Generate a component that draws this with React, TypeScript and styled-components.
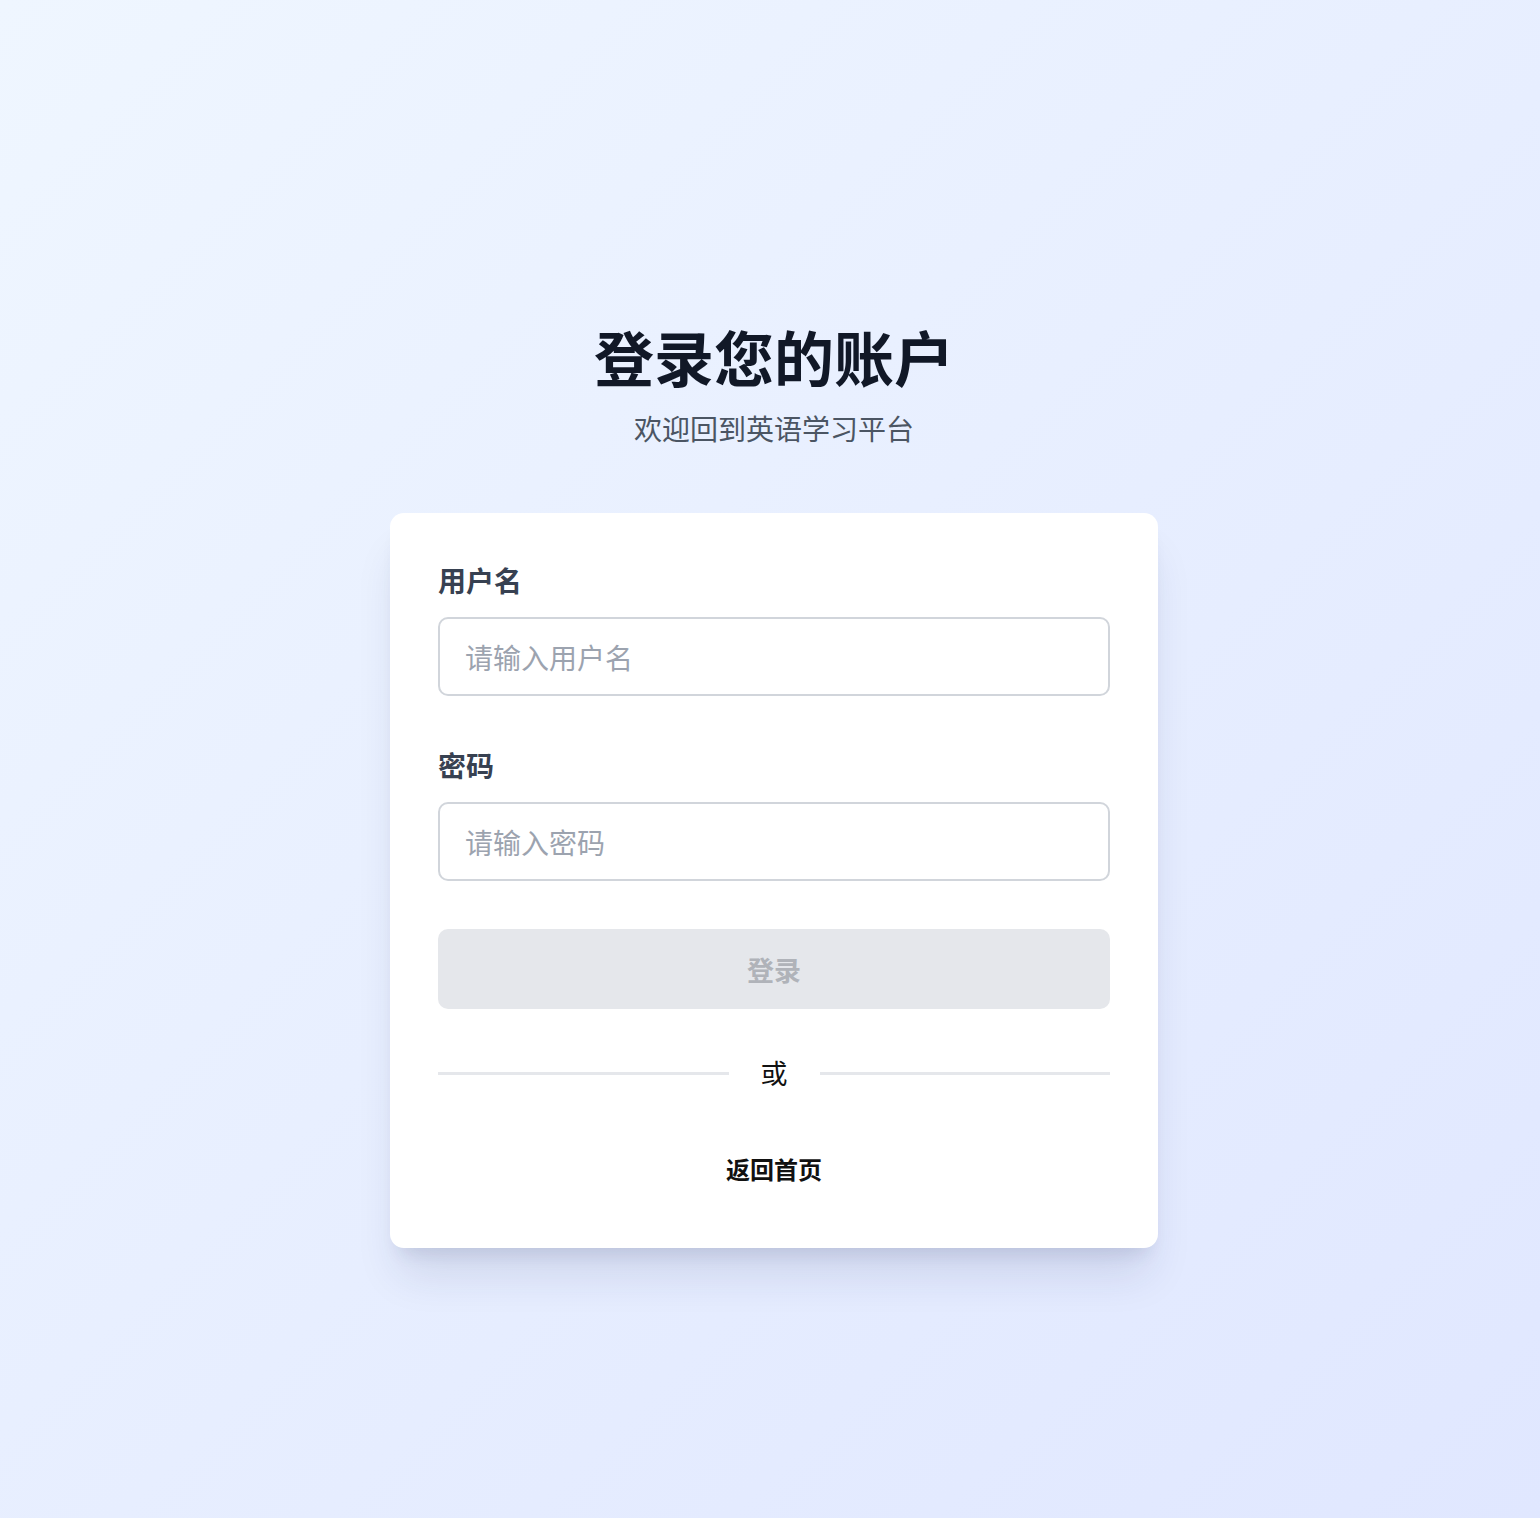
import React from "react";
import styled, { createGlobalStyle } from "styled-components";

const GlobalStyle = createGlobalStyle`
  * { box-sizing: border-box; }
  html, body { margin: 0; padding: 0; }
  body {
    font-family: "Noto Sans CJK SC", "Noto Sans", "Liberation Sans", sans-serif;
    background: #e4e9fe;
  }
`;

const Page = styled.div`
  min-height: 1518px;
  background: linear-gradient(135deg, #eff6ff 0%, #e0e7ff 100%);
  display: flex;
  flex-direction: column;
  align-items: center;
  padding: 320px 0 0 8px;
`;

const Title = styled.h1`
  margin: 0;
  font-size: 60px;
  line-height: 72px;
  font-weight: 700;
  color: #111827;
  text-align: center;
`;

const Subtitle = styled.p`
  margin: 16px 0 0;
  font-size: 28px;
  line-height: 40px;
  font-weight: 400;
  color: #4b5563;
  text-align: center;
`;

const Card = styled.form`
  margin-top: 65px;
  width: 768px;
  background: #ffffff;
  border-radius: 14px;
  padding: 47px 48px 61px;
  display: flex;
  flex-direction: column;
  box-shadow: 0 35px 44px -9px rgba(30, 41, 90, 0.12),
    0 14px 18px -10px rgba(30, 41, 90, 0.12);
`;

const Field = styled.div<{ $gap?: number }>`
  display: flex;
  flex-direction: column;
  gap: 17px;
  margin-top: ${(p) => p.$gap ?? 0}px;
`;

const Label = styled.label`
  font-size: 28px;
  line-height: 40px;
  font-weight: 600;
  color: #374151;
`;

const Input = styled.input`
  width: 100%;
  height: 79px;
  border: 2px solid #d1d5db;
  border-radius: 10px;
  padding: 0 25px;
  font-family: inherit;
  font-size: 28px;
  color: #111827;
  background: #fff;
  outline: none;
  &::placeholder {
    color: #9ca3af;
  }
`;

const SubmitButton = styled.button`
  margin-top: 48px;
  height: 80px;
  width: 100%;
  border: none;
  border-radius: 10px;
  background: #e5e7eb;
  color: #b0b3b9;
  font-family: inherit;
  font-size: 27px;
  font-weight: 700;
  cursor: not-allowed;
`;

const Divider = styled.div`
  margin-top: 44px;
  display: flex;
  align-items: center;
  gap: 32px;
`;

const Line = styled.div`
  flex: 1;
  height: 3px;
  background: #e5e7eb;
`;

const DividerText = styled.span`
  font-size: 27px;
  line-height: 40px;
  color: #111111;
`;

const HomeLink = styled.a`
  margin-top: 58px;
  align-self: center;
  font-size: 24px;
  line-height: 36px;
  font-weight: 700;
  color: #111111;
  text-decoration: none;
  cursor: pointer;
`;

export default function App() {
  return (
    <>
      <GlobalStyle />
      <Page>
        <Title>登录您的账户</Title>
        <Subtitle>欢迎回到英语学习平台</Subtitle>
        <Card onSubmit={(e) => e.preventDefault()}>
          <Field>
            <Label htmlFor="username">用户名</Label>
            <Input id="username" type="text" placeholder="请输入用户名" />
          </Field>
          <Field $gap={49}>
            <Label htmlFor="password">密码</Label>
            <Input id="password" type="password" placeholder="请输入密码" />
          </Field>
          <SubmitButton type="submit" disabled>
            登录
          </SubmitButton>
          <Divider>
            <Line />
            <DividerText>或</DividerText>
            <Line />
          </Divider>
          <HomeLink href="#">返回首页</HomeLink>
        </Card>
      </Page>
    </>
  );
}
